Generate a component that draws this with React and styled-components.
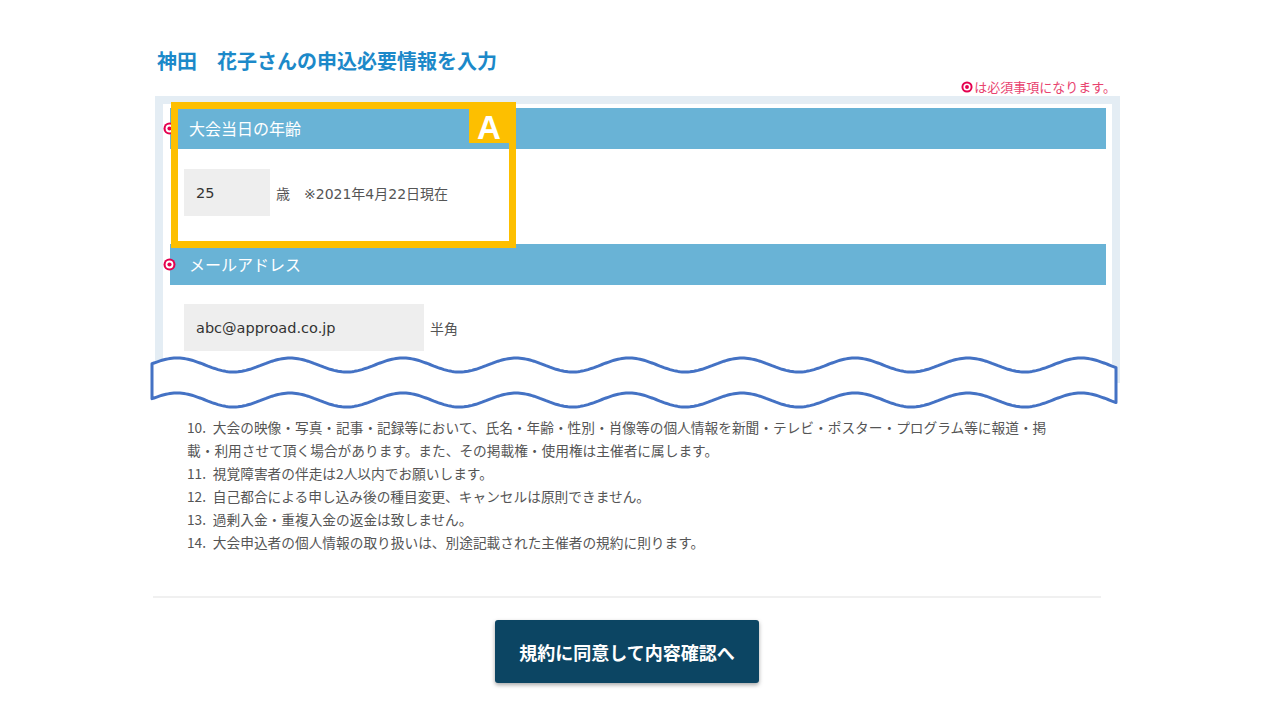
import styled, { createGlobalStyle } from 'styled-components';

const GlobalStyle = createGlobalStyle`
    body {
        margin: 0;
        background: #ffffff;
        font-family: "Noto Sans CJK JP", "Noto Sans", sans-serif;
        color: #555555;
    }
`;

// wave break drawn over the cut panel
const WAVE_W = 970;
const PERIOD = 113;
const waveY = (x, c) => c - 7 * Math.cos((2 * Math.PI * (x + 150 - 290)) / PERIOD);

function wavePath() {
    const top = [];
    const bottom = [];
    for (let x = 2; x <= WAVE_W - 4; x += 2) {
        top.push(`${x} ${waveY(x, 13).toFixed(1)}`);
        bottom.unshift(`${x} ${waveY(x, 48).toFixed(1)}`);
    }
    return `M ${top.join(' L ')} L ${bottom.join(' L ')} Z`;
}

function TargetIcon({ size = 13 }) {
    return (
        <svg width={size} height={size} viewBox="0 0 13 13">
            <circle cx="6.5" cy="6.5" r="6" fill="#e4004f" />
            <circle cx="6.5" cy="6.5" r="3.9" fill="#ffffff" />
            <circle cx="6.5" cy="6.5" r="2.1" fill="#e4004f" />
        </svg>
    );
}

const terms = [
    '10.\u2002大会の映像・写真・記事・記録等において、氏名・年齢・性別・肖像等の個人情報を新聞・テレビ・ポスター・プログラム等に報道・掲載・利用させて頂く場合があります。また、その掲載権・使用権は主催者に属します。',
    '11.\u2002視覚障害者の伴走は2人以内でお願いします。',
    '12.\u2002自己都合による申し込み後の種目変更、キャンセルは原則できません。',
    '13.\u2002過剰入金・重複入金の返金は致しません。',
    '14.\u2002大会申込者の個人情報の取り扱いは、別途記載された主催者の規約に則ります。',
];

function App() {
    return (
        <Page>
            <GlobalStyle />
            <Title>神田　花子さんの申込必要情報を入力</Title>
            <RequiredNote>
                <TargetIcon size={12} />
                は必須事項になります。
            </RequiredNote>

            <Panel>
                <PanelInner>
                    <FieldHeader>
                        <Mark><TargetIcon /></Mark>
                        大会当日の年齢
                    </FieldHeader>
                    <FieldBody>
                        <InputBox width={86}>25</InputBox>
                        <Suffix>歳　※2021年4月22日現在</Suffix>
                    </FieldBody>

                    <FieldHeader>
                        <Mark><TargetIcon /></Mark>
                        メールアドレス
                    </FieldHeader>
                    <FieldBody>
                        <InputBox width={240}>abc@approad.co.jp</InputBox>
                        <Suffix>半角</Suffix>
                    </FieldBody>
                </PanelInner>

                <Callout>
                    <CalloutLabel>A</CalloutLabel>
                </Callout>
            </Panel>

            <Wave width={WAVE_W} height="60" viewBox={`0 0 ${WAVE_W} 60`}>
                <path d={wavePath()} fill="#ffffff" stroke="#4472c4" strokeWidth="3" strokeLinejoin="round" />
            </Wave>

            <Terms>
                {terms.map((t) => (
                    <Term key={t}>{t}</Term>
                ))}
            </Terms>

            <Footer>
                <SubmitButton>規約に同意して内容確認へ</SubmitButton>
            </Footer>
        </Page>
    );
}

const Page = styled.div`
    width: 965px;
    padding: 47px 0 36px 155px;
`;

const Title = styled.h1`
    margin: 0 0 0 2px;
    font-size: 20px;
    line-height: 28px;
    font-weight: 700;
    color: #1c89c9;
`;

const RequiredNote = styled.div`
    display: flex;
    justify-content: flex-end;
    align-items: center;
    gap: 1px;
    margin: 3px 4px 1px 0;
    font-size: 13px;
    line-height: 17px;
    color: #e8436f;
`;

const Panel = styled.div`
    position: relative;
    height: 287px;
    overflow: hidden;
    background: #e4edf4;
    padding: 8px 8px 0;
    box-sizing: border-box;
`;

const PanelInner = styled.div`
    height: 100%;
    background: #ffffff;
    padding: 4px 6px 0 7px;
`;

const FieldHeader = styled.div`
    position: relative;
    height: 41px;
    line-height: 40px;
    padding-left: 19px;
    background: #69b3d6;
    color: #ffffff;
    font-size: 16px;
`;

const Mark = styled.span`
    position: absolute;
    left: -7px;
    top: 14px;
    display: flex;
`;

const FieldBody = styled.div`
    display: flex;
    align-items: center;
    padding: 20px 0 28px 14px;
    &:last-child {
        padding-top: 19px;
    }
`;

const InputBox = styled.div`
    width: ${(p) => p.width}px;
    height: 47px;
    box-sizing: border-box;
    padding-left: 12px;
    display: flex;
    align-items: center;
    background: #eeeeee;
    font-family: "DejaVu Sans", "Noto Sans CJK JP", sans-serif;
    font-size: 14.5px;
    color: #333333;
`;

const Suffix = styled.span`
    margin-left: 6px;
    font-family: "DejaVu Sans", "Noto Sans CJK JP", sans-serif;
    font-size: 14px;
    color: #555555;
`;

const Callout = styled.div`
    position: absolute;
    left: 16px;
    top: 6px;
    width: 345px;
    height: 146px;
    box-sizing: border-box;
    border: 7px solid #fdbf00;
`;

const CalloutLabel = styled.div`
    position: absolute;
    top: 0;
    right: 0;
    width: 40px;
    height: 34px;
    background: #fdbf00;
    color: #ffffff;
    font-family: "Liberation Sans Narrow", "Liberation Sans", Arial, sans-serif;
    font-weight: 700;
    font-size: 33px;
    line-height: 38px;
    text-align: center;
`;

const Wave = styled.svg`
    position: relative;
    z-index: 1;
    display: block;
    margin: -31px 0 0 -5px;
`;

const Terms = styled.div`
    width: 868px;
    margin: 4px 0 0 32px;
    font-size: 13.7px;
    line-height: 23px;
    color: #555555;
`;

const Term = styled.p`
    margin: 0;
`;

const Footer = styled.div`
    width: 948px;
    margin: 42px 0 0 -2px;
    padding-top: 22px;
    border-top: 2px solid #f0f0f0;
    display: flex;
    justify-content: center;
`;

const SubmitButton = styled.button`
    width: 264px;
    height: 63px;
    border: none;
    border-radius: 3px;
    background: #0c4563;
    color: #ffffff;
    font-family: "Noto Sans CJK JP", sans-serif;
    font-size: 18px;
    font-weight: 700;
    box-shadow: 0 2px 4px rgba(0, 0, 0, 0.35);
    cursor: pointer;
`;

export default App;
